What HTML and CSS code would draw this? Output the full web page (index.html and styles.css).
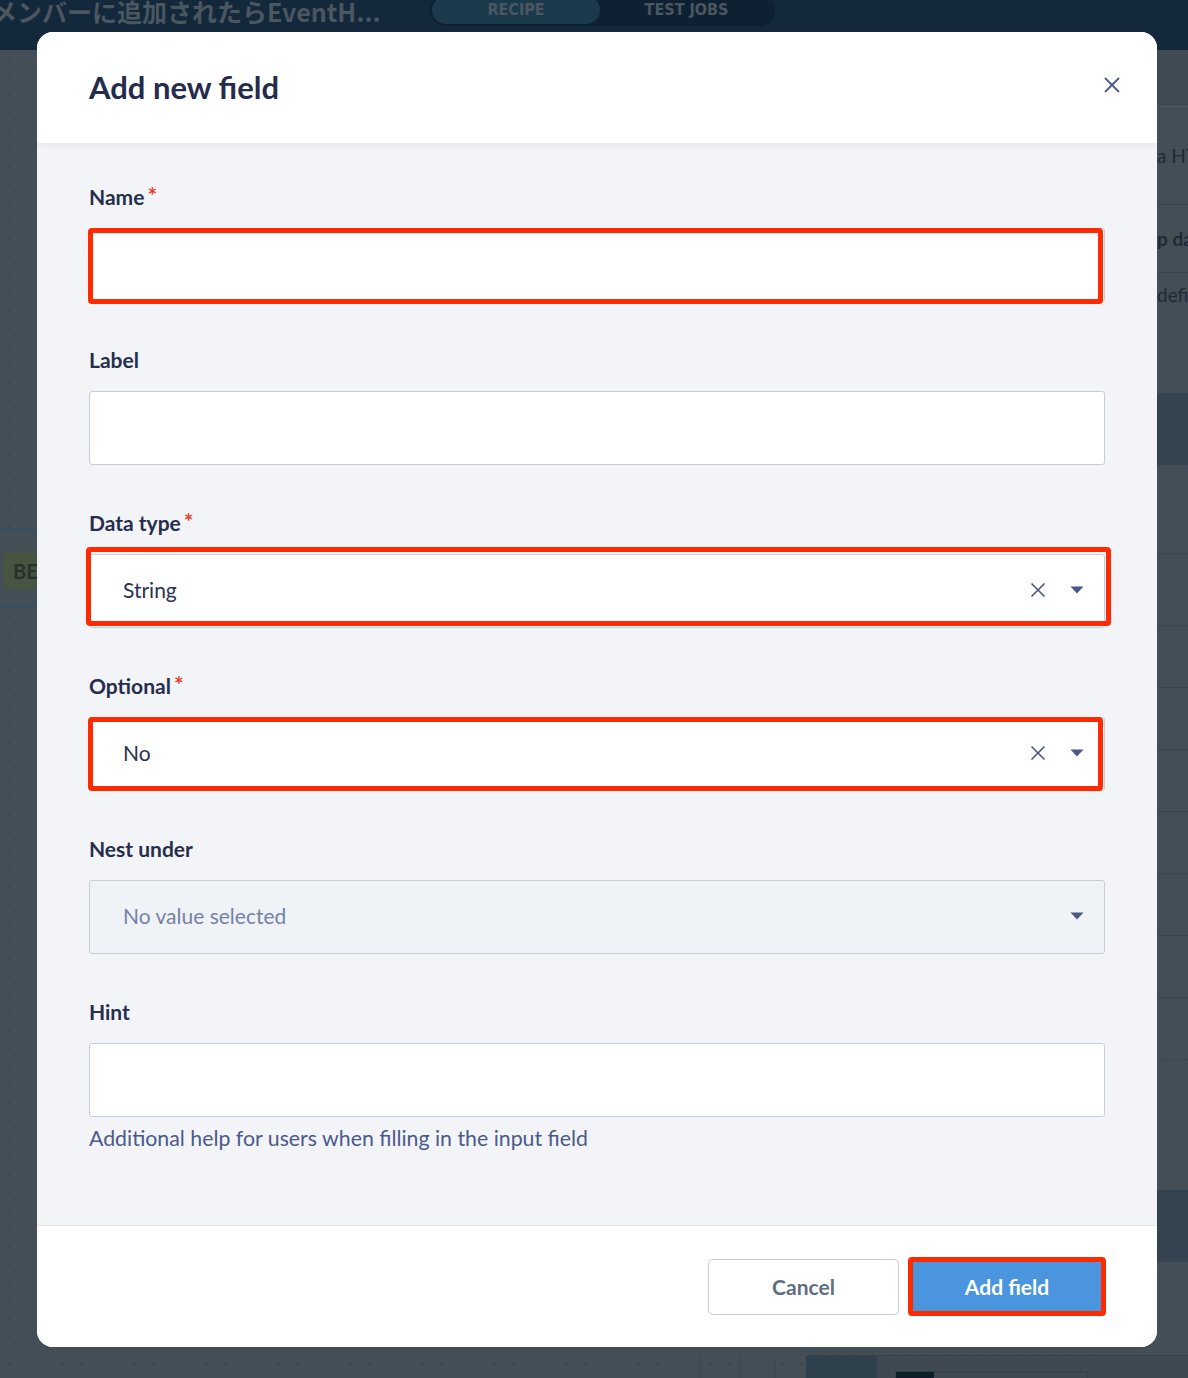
FILE: index.html
```html
<!DOCTYPE html>
<html lang="en">

<head>
    <meta charset="UTF-8">
    <meta name="viewport" content="width=device-width, initial-scale=1.0">
    <title>Add new field</title>
    <link rel="stylesheet" href="styles.css">
</head>

<body>
    <div class="app">
        <header class="topbar">
            <div class="recipe-title">メンバーに追加されたらEventH...</div>
            <div class="tabs">
                <span class="tab tab-active">RECIPE</span>
                <span class="tab">TEST JOBS</span>
            </div>
        </header>
        <div class="workspace">
            <div class="canvas">
                <div class="lane">
                    <span class="step-badge">BE</span>
                </div>
            </div>
            <aside class="side-panel">
                <div class="panel-head"></div>
                <div class="panel-row row-tall">a HTML</div>
                <div class="panel-row row-bold">p data</div>
                <div class="panel-row row-top">definition</div>
                <div class="panel-band"></div>
                <div class="panel-gap"></div>
                <div class="panel-row row-72"></div>
                <div class="panel-row row-62"></div>
                <div class="panel-row row-62"></div>
                <div class="panel-row row-62"></div>
                <div class="panel-row row-62"></div>
                <div class="panel-row row-62"></div>
                <div class="panel-row row-62"></div>
                <div class="panel-row row-62 row-dashed"></div>
                <div class="panel-gap-lg"></div>
                <div class="panel-band band-low"></div>
            </aside>
        </div>
        <div class="dock">
            <div class="dock-rail"></div>
            <div class="dock-card">
                <div class="dock-tab"></div>
                <div class="dock-input"><span class="dock-input-head"></span></div>
            </div>
        </div>
    </div>

    <div class="modal">
        <div class="modal-header">
            <h2 class="modal-title">Add new field</h2>
            <svg class="close-icon" width="18" height="18" viewBox="0 0 18 18">
                <path d="M2 2 L16 16 M16 2 L2 16" stroke="#4b5886" stroke-width="1.8" fill="none" />
            </svg>
        </div>

        <div class="modal-body">
            <div class="field">
                <label class="field-label">Name<span class="req">*</span></label>
                <div class="control">
                    <span class="mark mark-name"></span>
                </div>
            </div>

            <div class="field">
                <label class="field-label">Label</label>
                <div class="control"></div>
            </div>

            <div class="field">
                <label class="field-label">Data type<span class="req">*</span></label>
                <div class="control">
                    <span class="control-value">String</span>
                    <svg class="clear-icon" width="16" height="16" viewBox="0 0 16 16">
                        <path d="M1.5 1.5 L14.5 14.5 M14.5 1.5 L1.5 14.5" stroke="#4d5984" stroke-width="1.7" fill="none" />
                    </svg>
                    <svg class="caret-icon" width="14" height="8" viewBox="0 0 14 8">
                        <path d="M0.5 0.5 H13.5 L7 7.5 Z" fill="#4b5787" />
                    </svg>
                    <span class="mark mark-type"></span>
                </div>
            </div>

            <div class="field">
                <label class="field-label">Optional<span class="req">*</span></label>
                <div class="control">
                    <span class="control-value">No</span>
                    <svg class="clear-icon" width="16" height="16" viewBox="0 0 16 16">
                        <path d="M1.5 1.5 L14.5 14.5 M14.5 1.5 L1.5 14.5" stroke="#4d5984" stroke-width="1.7" fill="none" />
                    </svg>
                    <svg class="caret-icon" width="14" height="8" viewBox="0 0 14 8">
                        <path d="M0.5 0.5 H13.5 L7 7.5 Z" fill="#4b5787" />
                    </svg>
                    <span class="mark mark-optional"></span>
                </div>
            </div>

            <div class="field">
                <label class="field-label">Nest under</label>
                <div class="control control-muted">
                    <span class="control-value">No value selected</span>
                    <svg class="caret-icon" width="14" height="8" viewBox="0 0 14 8">
                        <path d="M0.5 0.5 H13.5 L7 7.5 Z" fill="#4b5787" />
                    </svg>
                </div>
            </div>

            <div class="field">
                <label class="field-label">Hint</label>
                <div class="control"></div>
                <p class="help">Additional help for users when filling in the input field</p>
            </div>
        </div>

        <div class="modal-footer">
            <button class="btn btn-cancel">Cancel</button>
            <button class="btn btn-primary">Add field</button>
        </div>
    </div>
</body>

</html>
```

FILE: styles.css
```css
body {
    margin: 0;
    height: 1378px;
    overflow: hidden;
    background-color: #434e56;
    font-family: "Source Sans Pro", Lato, "Noto Sans CJK JP", sans-serif;
}

.app {
    display: flex;
    flex-direction: column;
    height: 1378px;
}

/* dimmed page behind the dialog */
.topbar {
    display: flex;
    align-items: flex-start;
    height: 50px;
    flex: none;
    overflow: hidden;
    background-color: #13283b;
}

.recipe-title {
    width: 438px;
    margin-left: -8px;
    margin-top: -2px;
    font-family: "Noto Sans CJK JP", sans-serif;
    font-weight: 700;
    font-size: 25px;
    line-height: 26px;
    color: #4a5660;
    white-space: nowrap;
}

.tabs {
    display: flex;
    height: 32px;
    margin-top: -6px;
    padding: 2px;
    box-sizing: border-box;
    border-radius: 16px;
    background-color: #0e2133;
}

.tab {
    width: 173px;
    height: 28px;
    line-height: 28px;
    text-align: center;
    font-family: "DejaVu Sans Condensed", "DejaVu Sans", sans-serif;
    font-weight: 700;
    font-size: 16px;
    color: #4a5660;
    border-radius: 14px;
}

.tab-active {
    width: 168px;
    background-color: #1a3a4c;
}

.workspace {
    display: flex;
    flex: 1;
}

.canvas {
    flex: 1;
    padding-top: 478px;
    background-image: radial-gradient(circle, #3a454d 1px, transparent 1.6px);
    background-size: 18px 18px;
}

.lane {
    display: flex;
    align-items: center;
    height: 74px;
    border-top: 3px solid #3a4f5e;
    border-bottom: 3px solid #3a4f5e;
    background-color: #434e56;
}

.step-badge {
    padding: 7px 20px 5px 10px;
    margin-left: 3px;
    margin-top: 4px;
    border-radius: 6px;
    background-color: #47543f;
    color: #29312c;
    font-weight: 700;
    font-size: 20px;
    line-height: 25px;
}

.side-panel {
    width: 90px;
    display: flex;
    flex-direction: column;
    background-color: #434e56;
}

.panel-head {
    height: 56px;
    border-bottom: 1px solid #4e5961;
    background-color: #3f4a52;
}

.panel-row {
    display: flex;
    align-items: center;
    padding-left: 59px;
    box-sizing: border-box;
    border-bottom: 1px solid #3a444c;
    font-size: 19px;
    color: #1f2a36;
    white-space: nowrap;
}

.row-tall {
    height: 98px;
}

.row-bold {
    height: 68px;
    font-weight: 700;
}

.row-top {
    height: 120px;
    align-items: flex-start;
    padding-top: 10px;
    border-bottom: none;
}

.panel-band {
    height: 72px;
    background-color: #33434f;
}

.panel-gap {
    height: 88px;
    border-bottom: 1px solid #3a444c;
}

.row-72 {
    height: 72px;
}

.row-62 {
    height: 62px;
}

.row-dashed {
    border-bottom-style: dashed;
}

.panel-gap-lg {
    height: 130px;
}

.band-low {
    height: 71px;
    border-bottom: 1px solid #3a444c;
}

.dock {
    display: flex;
    height: 23px;
    flex: none;
    padding-left: 699px;
    background-image: radial-gradient(circle, #3a454d 1px, transparent 1.6px);
    background-size: 18px 18px;
}

.dock-rail {
    width: 74px;
    border-left: 1px solid #3a454d;
    border-right: 1px solid #3a454d;
    background: linear-gradient(to right, transparent 40px, #3a454d 40px, #3a454d 41px, transparent 41px);
}

.dock-card {
    display: flex;
    flex: 1;
    margin-left: 31px;
    border-top-left-radius: 4px;
    background-color: #3e4951;
    border-top: 1px solid #364048;
}

.dock-tab {
    width: 71px;
    background-color: #2f414d;
}

.dock-input {
    display: flex;
    width: 191px;
    margin: 15px 0 0 18px;
    border: 1px solid #36414a;
    border-bottom: none;
    border-radius: 3px 3px 0 0;
}

.dock-input-head {
    width: 38px;
    background-color: #0d1e28;
}

/* dialog */
.modal {
    position: absolute;
    left: 37px;
    top: 32px;
    width: 1120px;
    height: 1315px;
    display: flex;
    flex-direction: column;
    overflow: hidden;
    border-radius: 16px;
    background-color: #fff;
}

.modal-header {
    position: relative;
    z-index: 1;
    display: flex;
    align-items: center;
    justify-content: space-between;
    flex: none;
    height: 111px;
    padding: 0 36px 0 52px;
    background-color: #fff;
    box-shadow: 0 2px 6px rgba(30, 40, 70, 0.07);
}

.modal-title {
    margin: 0 0 2px;
    font-size: 31px;
    font-weight: 700;
    color: #252c4b;
}

.close-icon {
    margin-bottom: 6px;
}

.modal-body {
    flex: 1;
    padding: 42px 52px 0;
    background-color: #f3f4f7;
}

.field {
    margin-bottom: 46px;
}

.field-label {
    display: block;
    margin-bottom: 19px;
    font-size: 21px;
    font-weight: 700;
    line-height: 24px;
    color: #262e4d;
}

.req {
    margin-left: 3px;
    font-size: 23px;
    line-height: 20px;
    vertical-align: top;
    color: #e5422b;
}

.control {
    position: relative;
    display: flex;
    align-items: center;
    height: 74px;
    box-sizing: border-box;
    padding: 0 20px 3px 33px;
    border: 1px solid #c6cdd7;
    border-radius: 3px;
    background-color: #fff;
    font-size: 21px;
    color: #2a3252;
}

.control-muted {
    background-color: #eff2f6;
    color: #7682a4;
}

.control-value {
    flex: 1;
}

.clear-icon {
    margin-right: 24px;
}

.mark {
    position: absolute;
    border: 5px solid #ff2a00;
    border-radius: 4px;
    pointer-events: none;
}

.mark-name {
    top: -1px;
    right: 1px;
    bottom: -3px;
    left: -2px;
}

.mark-type {
    top: -8px;
    right: -7px;
    bottom: 1px;
    left: -4px;
}

.mark-optional {
    top: -1px;
    right: 1px;
    bottom: -1px;
    left: -2px;
}

.help {
    margin: 9px 0 0;
    font-size: 21.3px;
    line-height: 24px;
    color: #4a5a8c;
}

.modal-footer {
    display: flex;
    align-items: center;
    justify-content: flex-end;
    gap: 9px;
    flex: none;
    height: 122px;
    box-sizing: border-box;
    padding-right: 51px;
    border-top: 1px solid #e3e6eb;
    background-color: #fff;
}

.btn {
    font-family: inherit;
    font-size: 21px;
    font-weight: 700;
    cursor: pointer;
}

.btn-cancel {
    width: 191px;
    height: 56px;
    border: 1px solid #c5ccd6;
    border-radius: 5px;
    background-color: #fff;
    color: #5e6f7f;
}

.btn-primary {
    width: 198px;
    height: 59px;
    border: 5px solid #ff2a00;
    border-radius: 4px;
    background-color: #4a95dd;
    color: #fff;
}
```
